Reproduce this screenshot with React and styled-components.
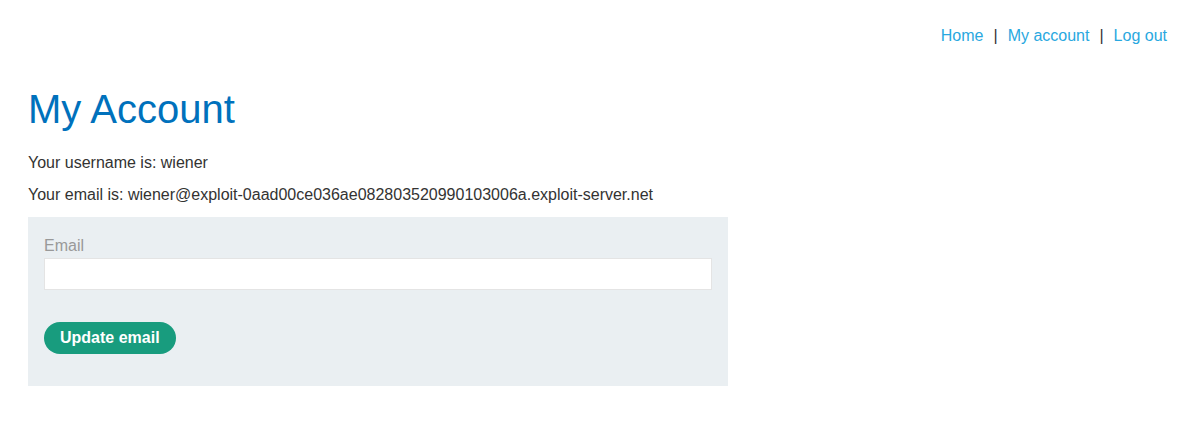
import React from 'react'
import styled, { createGlobalStyle } from 'styled-components'

const GlobalStyle = createGlobalStyle`
    html, body {
        margin: 0;
        padding: 0;
        background: #fff;
    }
    body {
        font-family: 'Liberation Sans', Arial, sans-serif;
        font-size: 16px;
        color: #333332;
    }
`

const Page = styled.div`
    padding: 0 25px 0 28px;
`

const Nav = styled.nav`
    display: flex;
    justify-content: flex-end;
    align-items: center;
    gap: 10px;
    padding-top: 26px;
    height: 20px;
    line-height: 20px;
`

const NavLink = styled.a`
    color: #29a8e0;
    text-decoration: none;
`

const Sep = styled.span`
    color: #333332;
`

const Title = styled.h1`
    margin: 39px 0 0;
    font-size: 40px;
    font-weight: normal;
    line-height: 48px;
    color: #0071bc;
`

const Line = styled.p`
    margin: 0;
    line-height: 20px;
    margin-top: ${props => props.$top}px;
`

const FormBox = styled.form`
    width: 700px;
    box-sizing: border-box;
    margin-top: 12px;
    padding: 19px 16px 32px;
    background: #eaeff2;
`

const Label = styled.label`
    display: block;
    color: #999;
    line-height: 20px;
`

const Input = styled.input`
    display: block;
    box-sizing: border-box;
    width: 100%;
    height: 32px;
    margin-top: 2px;
    background: #fff;
    border: 1px solid #e4e4e4;
    outline: none;
`

const Button = styled.button`
    display: block;
    margin-top: 32px;
    height: 32px;
    padding: 0 16px;
    border: none;
    border-radius: 16px;
    background: #189c7e;
    color: #fff;
    font-family: 'Liberation Sans', Arial, sans-serif;
    font-size: 16px;
    font-weight: bold;
`

export default () => (
    <>
        <GlobalStyle />
        <Page>
            <Nav>
                <NavLink href="#">Home</NavLink>
                <Sep>|</Sep>
                <NavLink href="#">My account</NavLink>
                <Sep>|</Sep>
                <NavLink href="#">Log out</NavLink>
            </Nav>
            <Title>My Account</Title>
            <Line $top={20}>Your username is: wiener</Line>
            <Line $top={12}>
                Your email is: wiener@exploit-0aad00ce036ae082803520990103006a.exploit-server.net
            </Line>
            <FormBox onSubmit={e => e.preventDefault()}>
                <Label>Email</Label>
                <Input type="email" />
                <Button type="submit">Update email</Button>
            </FormBox>
        </Page>
    </>
)
